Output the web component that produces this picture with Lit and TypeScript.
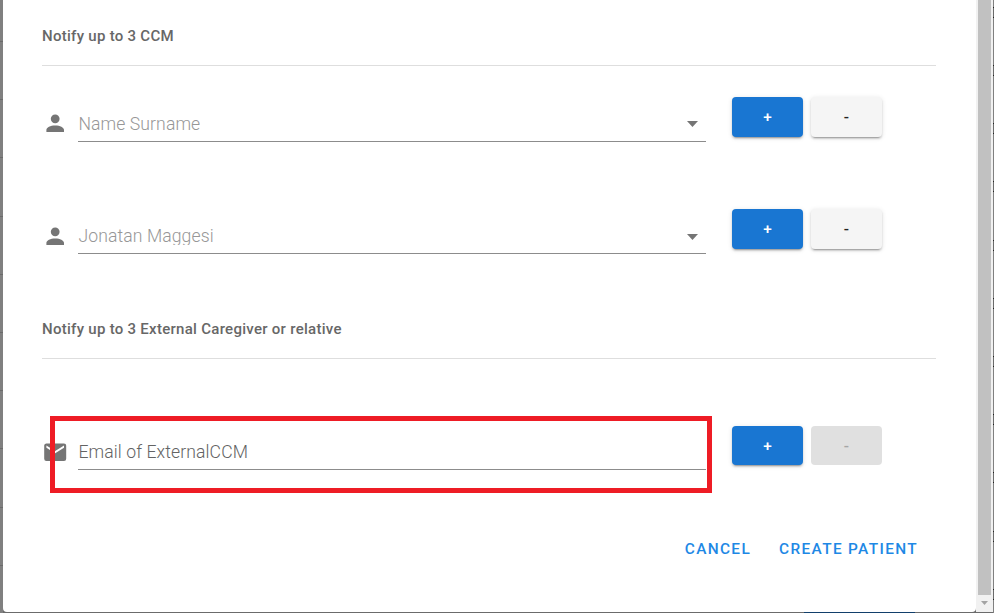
import { LitElement, html, css, svg } from "lit";
import { customElement } from "lit/decorators.js";
import { classMap } from "lit/directives/class-map.js";

const PERSON = "M12 4a4 4 0 1 1 0 8 4 4 0 0 1 0-8m0 10c4.42 0 8 1.79 8 4v2H4v-2c0-2.21 3.58-4 8-4Z";
const MAIL = "M20 8l-8 5-8-5V6l8 5 8-5m0-2H4c-1.11 0-2 .89-2 2v12a2 2 0 0 0 2 2h16a2 2 0 0 0 2-2V6a2 2 0 0 0-2-2Z";

const icon = (d: string) => html`<svg class="icon" viewBox="0 0 24 24">${svg`<path d=${d} />`}</svg>`;

@customElement("app-root")
export class AppRoot extends LitElement {
  static styles = css`
    :host {
      display: flex;
      box-sizing: border-box;
      width: 994px;
      height: 613px;
      overflow: hidden;
      font-family: Roboto, sans-serif;
      background: #6b6b6b;
    }
    .left {
      width: 3px;
      background: repeating-linear-gradient(to bottom, #808080 0 57.2px, #6b6b6b 57.2px 58.2px);
      background-position-y: -16.2px;
      background-size: 3px 800px;
    }
    .main {
      width: 973px;
      background: linear-gradient(to right, #6b6b6b 801px, #123f6b 801px 912px, #6b6b6b 912px);
    }
    .dialog {
      box-sizing: border-box;
      height: 612px;
      padding: 0 40px 0 39px;
      background: #fff;
      border-radius: 0 0 4px 4px;
    }
    .heading {
      box-sizing: border-box;
      border-bottom: 1px solid #dedede;
      color: #676767;
      font-size: 15px;
      font-weight: 500;
      line-height: 20px;
      letter-spacing: 0.28px;
    }
    .first { height: 66px; padding-top: 26px; }
    .second { height: 69px; padding-top: 29px; }
    .row {
      display: flex;
      height: 112px;
      padding-top: 31px;
      box-sizing: border-box;
    }
    .row.last { height: 106px; padding: 0; margin-top: 67px; }
    .icon {
      width: 26.4px;
      height: 26.4px;
      margin-top: 13px;
      fill: #757575;
      flex: none;
    }
    .low .icon { margin-top: 14px; }
    .field {
      box-sizing: border-box;
      display: flex;
      justify-content: space-between;
      width: 628px;
      height: 45px;
      margin-left: 9.6px;
      padding-top: 16px;
      border-bottom: 1px solid #8c8c8c;
      color: #979797;
      font-size: 17.6px;
      font-weight: 340;
      line-height: 22px;
      letter-spacing: 0.1px;
    }
    .label { height: 20px; padding-left: 0.4px; overflow: hidden; }
    .last .label { height: 22px; }
    .last .field {
      height: 44px;
      padding-top: 15px;
      color: #636363;
      font-weight: 360;
    }
    .arrow {
      width: 11px;
      height: 6px;
      margin: 8px 8px 0 0;
      background: #757575;
      clip-path: polygon(0 0, 100% 0, 50% 100%);
    }
    .low .arrow { margin-top: 9px; }
    .buttons { display: flex; gap: 8px; margin-left: 26px; }
    .btn {
      box-sizing: border-box;
      width: 71px;
      height: 40px;
      padding: 0;
      border: 0;
      border-radius: 4px;
      font: 500 15.4px/40px Roboto, sans-serif;
      text-align: center;
      box-shadow: 0 3px 1px -2px rgba(0,0,0,.2), 0 2px 2px rgba(0,0,0,.14), 0 1px 5px rgba(0,0,0,.12);
    }
    .last .btn { height: 39px; }
    .plus { background: #1976d2; color: #fff; }
    .minus { background: #f5f5f5; color: #222; }
    .off { background: #e0e0e0; color: #a6a6a6; box-shadow: none; }
    .actions {
      display: flex;
      justify-content: flex-end;
      gap: 28px;
      padding-right: 18px;
      margin-top: 7px;
      color: #1e88e5;
      font-size: 15.4px;
      font-weight: 500;
      line-height: 20px;
      letter-spacing: 1.35px;
    }
    .callout {
      position: absolute;
      left: 50px;
      top: 416px;
      width: 662px;
      height: 77px;
      box-sizing: border-box;
      border: 5px solid #ee1c25;
    }
    .scroll {
      display: flex;
      flex-direction: column;
      width: 17px;
      height: 612px;
      align-items: center;
      background: #f1f1f1;
    }
    .thumb { width: 13px; height: 595px; background: #c1c1c1; }
    .down {
      width: 7px;
      height: 4px;
      margin-top: 6px;
      background: #a3a3a3;
      clip-path: polygon(0 0, 100% 0, 50% 100%);
    }
    .edge {
      width: 1px;
      background: repeating-linear-gradient(to bottom, #222 0 1px, #808080 1px 48.2px, #222 48.2px 49.2px, #6b6b6b 49.2px 58.2px);
      background-position-y: -41.4px;
      background-size: 1px 800px;
    }
  `;

  private row(label: string, glyph: string, kind: "" | "low" | "last" = "") {
    const email = kind === "last";
    return html`<div class=${classMap({ row: true, low: kind === "low", last: email })}>
      ${icon(glyph)}
      <div class="field"><span class="label">${label}</span>${email ? "" : html`<i class="arrow"></i>`}</div>
      <div class="buttons">
        <button class="btn plus">+</button>
        <button class=${classMap({ btn: true, minus: true, off: email })}>-</button>
      </div>
    </div>`;
  }

  render() {
    return html`
      <div class="left"></div>
      <div class="main">
        <div class="dialog">
          <div class="heading first">Notify up to 3 CCM</div>
          ${this.row("Name Surname", PERSON)}
          ${this.row("Jonatan Maggesi", PERSON, "low")}
          <div class="heading second">Notify up to 3 External Caregiver or relative</div>
          ${this.row("Email of ExternalCCM", MAIL, "last")}
          <div class="actions"><span>CANCEL</span><span>CREATE PATIENT</span></div>
        </div>
      </div>
      <div class="scroll"><div class="thumb"></div><div class="down"></div></div>
      <div class="edge"></div>
      <div class="callout"></div>
    `;
  }
}
